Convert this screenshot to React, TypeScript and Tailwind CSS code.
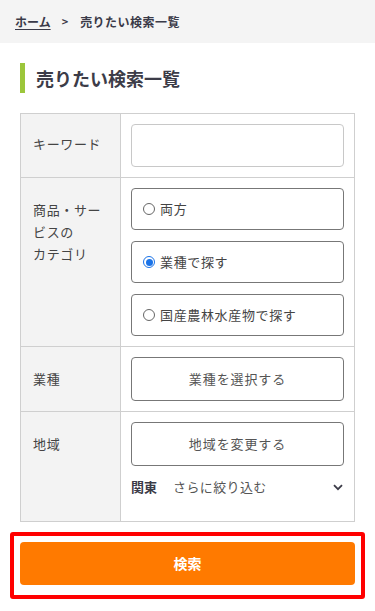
import { useState } from 'react'

const font = { fontFamily: '"Noto Sans CJK JP", "Noto Sans", sans-serif' }

type RadioOption = { value: string; label: string }

const categoryOptions: RadioOption[] = [
  { value: 'both', label: '両方' },
  { value: 'industry', label: '業種で探す' },
  { value: 'produce', label: '国産農林水産物で探す' },
]

function RadioDot({ checked }: { checked: boolean }) {
  return (
    <span
      className={
        checked
          ? 'flex h-[12px] w-[12px] shrink-0 items-center justify-center rounded-full border-[1.5px] border-[#1a73e8] bg-white'
          : 'h-[12px] w-[12px] shrink-0 rounded-full border border-[#666] bg-white'
      }
    >
      {checked && <span className="h-[7px] w-[7px] rounded-full bg-[#1a73e8]" />}
    </span>
  )
}

export default function App() {
  const [category, setCategory] = useState('industry')

  return (
    <div className="min-h-[611px] bg-white text-[#444]" style={font}>
      {/* Breadcrumb */}
      <nav className="flex h-[43px] items-center bg-[#f4f4f4] px-[15px] text-[12px] font-bold text-[#3a3a48]">
        <a href="#" className="underline underline-offset-2">ホーム</a>
        <span className="ml-[11px] mr-[12px] text-[11px]">&gt;</span>
        <span className="tracking-[0.04em]">売りたい検索一覧</span>
      </nav>

      {/* Heading */}
      <div className="mt-[20px] flex items-center px-[20px]">
        <span className="h-[30px] w-[5px] bg-[#9cc63b]" />
        <h1 className="ml-[11px] text-[18px] font-bold leading-[30px] text-[#3c3c48]">売りたい検索一覧</h1>
      </div>

      {/* Search table */}
      <div className="mx-[20px] mt-[20px] border border-[#cfcfcf] text-[13px] tracking-[0.05em]">
        {/* Keyword */}
        <div className="flex">
          <div className="w-[100px] shrink-0 border-r border-[#cfcfcf] bg-[#f3f3f3] px-[12px] pt-[19px] leading-[22px]">
            キーワード
          </div>
          <div className="flex-1 px-[10px] py-[10px]">
            <input
              type="text"
              className="block h-[43px] w-full rounded-[4px] border border-[#c8c8c8] bg-white px-[8px] outline-none"
            />
          </div>
        </div>

        {/* Category */}
        <div className="flex border-t border-[#cfcfcf]">
          <div className="w-[100px] shrink-0 border-r border-[#cfcfcf] bg-[#f3f3f3] px-[12px] pt-[21px] leading-[22px]">
            商品・サービスの
            <br />
            カテゴリ
          </div>
          <div className="flex flex-1 flex-col gap-[11px] px-[10px] py-[10px]">
            {categoryOptions.map((o) => (
              <label
                key={o.value}
                onClick={() => setCategory(o.value)}
                className="flex h-[42px] cursor-pointer items-center gap-[5px] rounded-[4px] border border-[#777] bg-white px-[11px] text-[#444]"
              >
                <RadioDot checked={category === o.value} />
                <span>{o.label}</span>
              </label>
            ))}
          </div>
        </div>

        {/* Industry */}
        <div className="flex border-t border-[#cfcfcf]">
          <div className="w-[100px] shrink-0 border-r border-[#cfcfcf] bg-[#f3f3f3] px-[12px] pt-[21px] leading-[22px]">
            業種
          </div>
          <div className="flex-1 px-[10px] py-[10px]">
            <button className="flex h-[44px] w-full items-center justify-center rounded-[4px] border border-[#777] bg-white tracking-[0.07em] text-[#555]">
              業種を選択する
            </button>
          </div>
        </div>

        {/* Area */}
        <div className="flex border-t border-[#cfcfcf]">
          <div className="w-[100px] shrink-0 border-r border-[#cfcfcf] bg-[#f3f3f3] px-[12px] pt-[21px] leading-[22px]">
            地域
          </div>
          <div className="flex-1 px-[10px] pb-[23px] pt-[10px]">
            <button className="flex h-[44px] w-full items-center justify-center rounded-[4px] border border-[#777] bg-white tracking-[0.07em] text-[#555]">
              地域を変更する
            </button>
            <div className="mt-[10px] flex h-[22px] items-center">
              <span className="font-bold tracking-normal text-[#3c3c48]">関東</span>
              <span className="ml-[16px] tracking-[0.03em] text-[#555]">さらに絞り込む</span>
              <svg className="ml-auto mr-[1px]" width="10" height="7" viewBox="0 0 10 7" fill="none">
                <path d="M1 1.2 5 5.2 9 1.2" stroke="#3c3c48" strokeWidth="1.8" />
              </svg>
            </div>
          </div>
        </div>
      </div>

      {/* Submit */}
      <div className="mx-[10px] mt-[10px] rounded-[3px] border-[4px] border-[#ff0000] px-[6px] pb-[10px] pt-[6px]">
        <button className="flex h-[43px] w-full items-center justify-center rounded-[4px] bg-[#ff7a00] text-[14px] font-bold text-white">
          検索
        </button>
      </div>
    </div>
  )
}
